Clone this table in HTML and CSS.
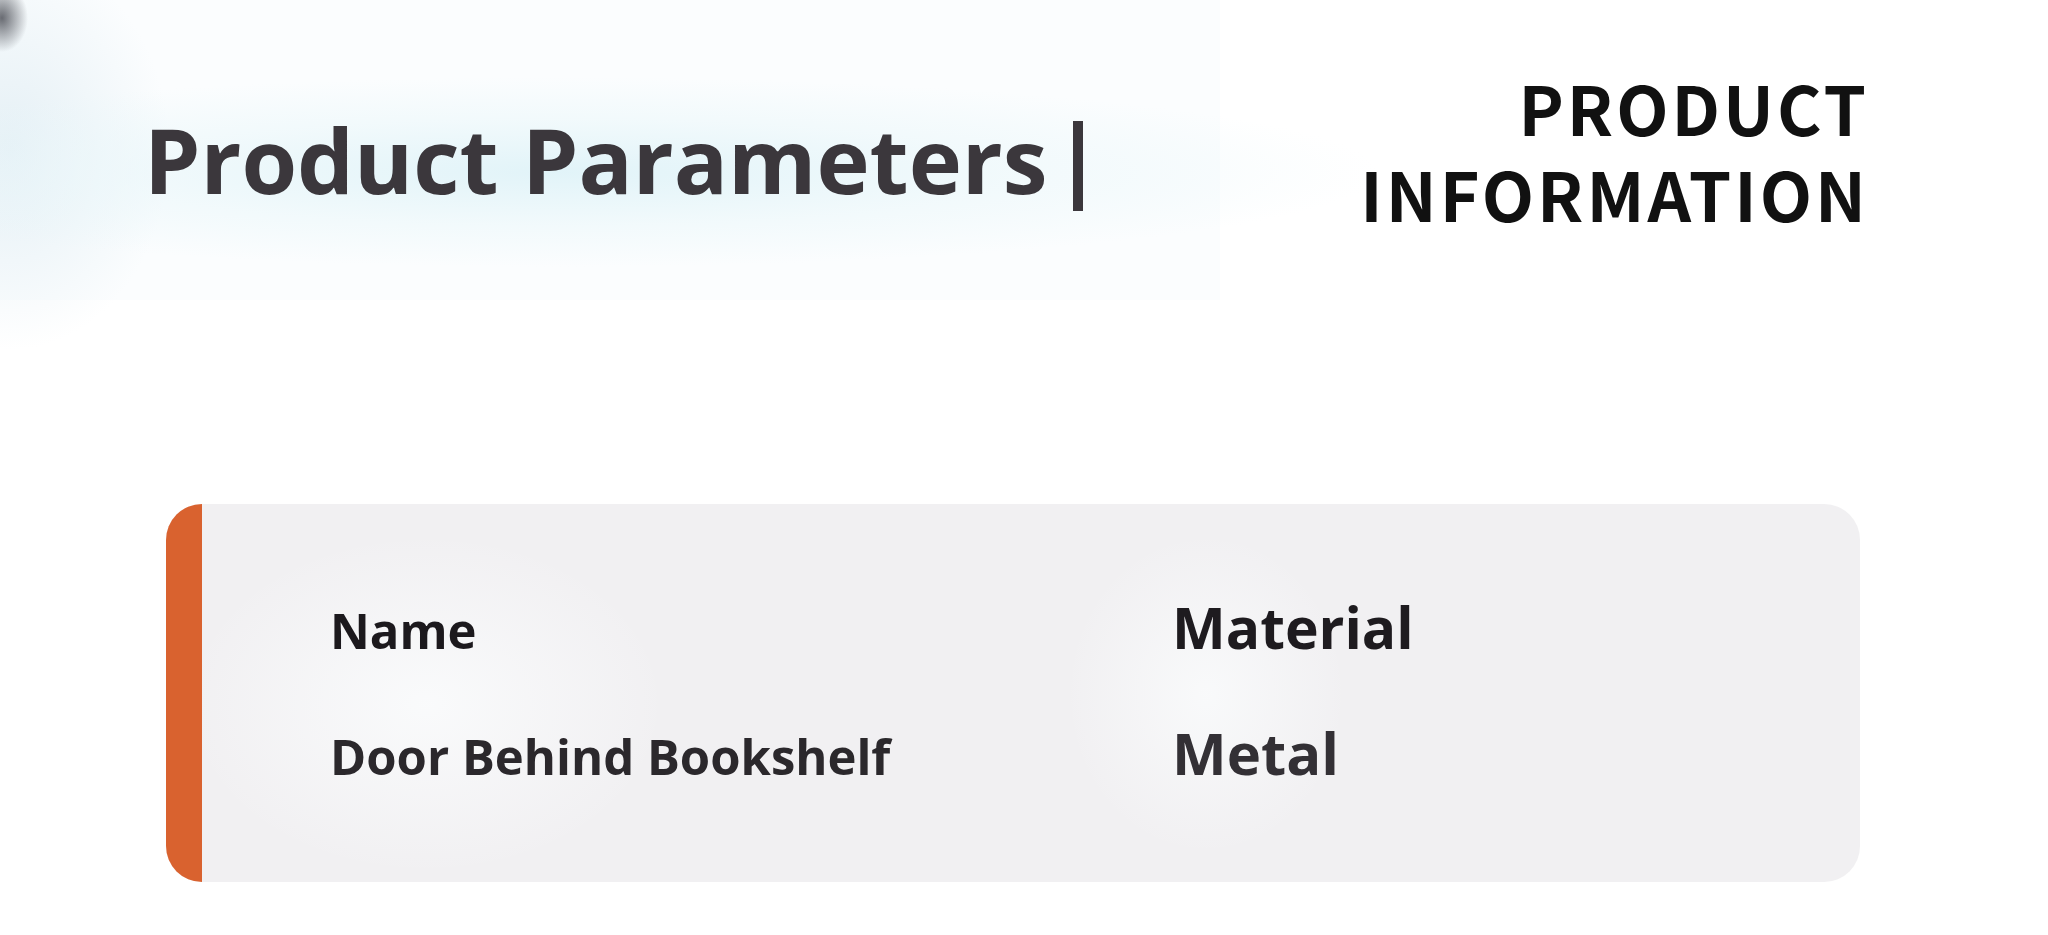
FILE: index.html
```html
<!DOCTYPE html>
<html lang="en">
<head>
<meta charset="utf-8">
<title>Product Parameters</title>
<link rel="stylesheet" href="styles.css">
</head>
<body>
<div class="page">
  <header class="head">
    <h1 class="title">Product Parameters<span class="caret"></span></h1>
    <div class="en">
      <div class="en-line">PRODUCT</div>
      <div class="en-line">INFORMATION</div>
    </div>
  </header>
  <section class="card">
    <div class="accent"></div>
    <div class="grid">
      <div class="cell label">Name</div>
      <div class="cell label big">Material</div>
      <div class="cell value">Door Behind Bookshelf</div>
      <div class="cell value big">Metal</div>
    </div>
  </section>
</div>
</body>
</html>
```

FILE: styles.css
```css
html, body {
  margin: 0;
  padding: 0;
}
body {
  width: 2048px;
  height: 935px;
  overflow: hidden;
  background: #ffffff;
}
.page {
  width: 2048px;
  height: 935px;
  box-sizing: border-box;
  padding-top: 64px;
  background:
    radial-gradient(ellipse 26px 34px at 2px 18px, rgba(70,72,80,0.8), rgba(70,72,80,0) 100%),
    radial-gradient(ellipse 820px 95px at 560px 172px, rgba(224,243,248,0.95), rgba(234,247,250,0.55) 55%, rgba(255,255,255,0) 100%),
    radial-gradient(ellipse 160px 200px at 10px 150px, rgba(226,238,244,0.9), rgba(255,255,255,0) 100%),
    linear-gradient(#fbfdfe, #fbfdfe) 0 0 / 1220px 300px no-repeat,
    #ffffff;
}
.head {
  display: flex;
  justify-content: space-between;
  align-items: flex-start;
  padding: 0 179px 0 144px;
}
.title {
  margin: 43px 0 0 0;
  font-family: "Open Sans", "Noto Sans", sans-serif;
  font-weight: 700;
  font-size: 90px;
  line-height: 100px;
  color: #3b373c;
  display: flex;
  align-items: center;
}
.caret {
  display: inline-block;
  width: 10px;
  height: 90px;
  margin-left: 26px;
  margin-top: 14px;
  background: #3b373c;
}
.en {
  font-family: "Noto Sans CJK SC", "Noto Sans", sans-serif;
  font-weight: 700;
  font-size: 68px;
  letter-spacing: 3px;
  text-align: right;
  color: #111111;
}
.en-line {
  height: 86px;
  line-height: 86px;
}
.card {
  margin: 268px 0 0 166px;
  width: 1694px;
  height: 378px;
  border-radius: 36px;
  overflow: hidden;
  display: flex;
  background:
    radial-gradient(ellipse 240px 170px at 260px 200px, rgba(250,251,252,0.95), rgba(250,251,252,0) 100%),
    radial-gradient(ellipse 140px 160px at 1040px 190px, rgba(249,250,251,0.95), rgba(249,250,251,0) 100%),
    #f1f0f2;
}
.accent {
  width: 36px;
  flex: none;
  background: #d9622f;
}
.grid {
  display: grid;
  grid-template-columns: 842px auto;
  align-items: baseline;
  align-content: start;
  row-gap: 68px;
  padding: 95px 0 0 128px;
  font-family: "Open Sans", "Noto Sans", sans-serif;
  font-weight: 700;
}
.cell {
  font-size: 49px;
  line-height: 49px;
  white-space: nowrap;
}
.label {
  color: #1c191d;
}
.value {
  color: #2b282c;
}
.label.big {
  font-size: 57px;
  line-height: 57px;
  color: #1e1b1f;
}
.value.big {
  font-size: 58px;
  line-height: 58px;
  color: #333035;
}
```
